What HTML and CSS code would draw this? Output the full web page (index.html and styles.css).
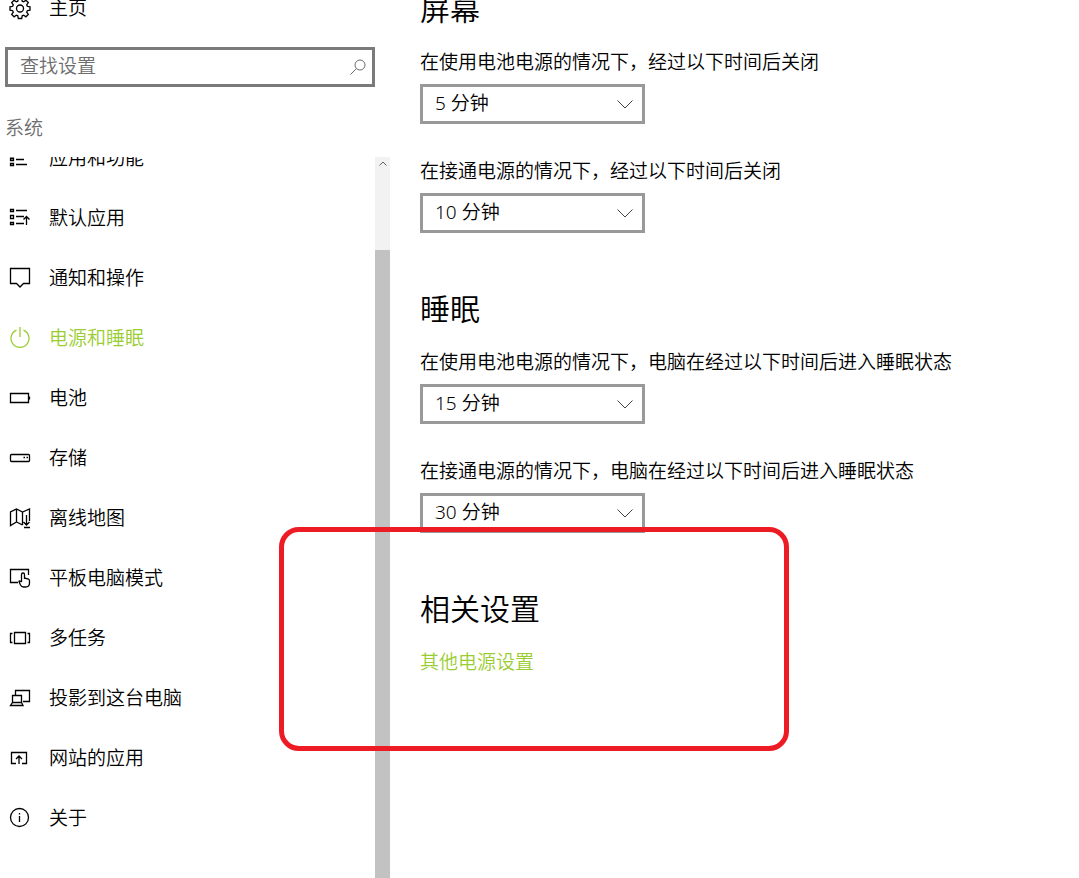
FILE: index.html
```
<!DOCTYPE html>
<html lang="zh-CN">
<head>
<meta charset="UTF-8" />
<meta name="viewport" content="width=device-width, initial-scale=1.0" />
<title>设置</title>
<link rel="stylesheet" href="styles.css">
</head>
<body>

<aside class="sidebar">
  <a class="nav-item home" href="#">
    <svg class="icon" viewBox="0 0 24 24"><path d="M10.3 2.5h3.4l.5 2.7 1.5.6 2.2-1.6 2.4 2.4-1.6 2.2.6 1.5 2.7.5v3.4l-2.7.5-.6 1.5 1.6 2.2-2.4 2.4-2.2-1.6-1.5.6-.5 2.7h-3.4l-.5-2.7-1.5-.6-2.2 1.6-2.4-2.4 1.6-2.2-.6-1.5-2.7-.5v-3.4l2.7-.5.6-1.5-1.6-2.2 2.4-2.4 2.2 1.6 1.5-.6z"/><circle cx="12" cy="12.5" r="3.5"/></svg>
    主页
  </a>

  <div class="search">
    <input type="text" placeholder="查找设置" aria-label="查找设置" />
    <svg class="search-icon" viewBox="0 0 16 16"><circle cx="10" cy="6" r="5"/><path d="M6.5 9.5L.5 15.5"/></svg>
  </div>

  <h2 class="group-title">系统</h2>

  <div class="nav-area">
    <nav>
      <a class="nav-item" href="#">
        <svg class="icon" viewBox="0 0 24 24"><path d="M2.5 7.5h3v3h-3zM2.5 12.5h3v2h-3zM2.5 17.5h3v2h-3zM8 8.5h11M8 13.5h8M8 18.5h11"/></svg>
        应用和功能
      </a>
      <a class="nav-item" href="#">
        <svg class="icon" viewBox="0 0 24 24"><path d="M2.5 3.5h3v2h-3zM2.5 9.5h3v3h-3zM2.5 16.5h3v2h-3zM8 4.5h11M8 10.5h8M8 17.5h8M18.5 19v-8M15.5 13.5l3-3 3 3"/></svg>
        默认应用
      </a>
      <a class="nav-item" href="#">
        <svg class="icon" viewBox="0 0 24 24"><path d="M2.5 2.5h19v15h-6L12 21l-3.5-3.5h-6z"/></svg>
        通知和操作
      </a>
      <a class="nav-item active" href="#">
        <svg class="icon" viewBox="0 0 24 24"><path d="M12 1v10M8.5 4.1a9 9 0 1 0 7 0"/></svg>
        电源和睡眠
      </a>
      <a class="nav-item" href="#">
        <svg class="icon" viewBox="0 0 24 24"><path d="M2.5 7.5h18v9h-18zM21.5 10.5v3"/></svg>
        电池
      </a>
      <a class="nav-item" href="#">
        <svg class="icon" viewBox="0 0 24 24"><rect x="2.5" y="8.5" width="19" height="7" rx="1"/><path d="M15.5 11.5h1.5M18.5 11.5h1.5"/></svg>
        存储
      </a>
      <a class="nav-item" href="#">
        <svg class="icon" viewBox="0 0 24 24"><path d="M14.5 19l-6-3-6 3.500V6l6-3 6 3 7-3v12M8.500 3v13M14.500 6v13M18.500 9v10M15.500 16l3 3 3-3M16 21.500h6"/></svg>
        离线地图
      </a>
      <a class="nav-item" href="#">
        <svg class="icon" viewBox="0 0 24 24"><path d="M10 16.500H2.500v-13h18V9M13.500 16V8.500a1.500 1.500 0 0 1 3 0V13M16.500 12l4 1q1 .5 1 2v2q0 4-4 4h-2q-2 0-3-2l-1.500-3.500q0-1.500 2.500.5"/></svg>
        平板电脑模式
      </a>
      <a class="nav-item" href="#">
        <svg class="icon" viewBox="0 0 24 24"><path d="M6.500 6.500h11v11h-11zM4.500 7.500h-2v9h2M19.500 7.500h2v9h-2"/></svg>
        多任务
      </a>
      <a class="nav-item" href="#">
        <svg class="icon" viewBox="0 0 24 24"><path d="M7.500 9V4.500h14v11H15M4.500 16V9.500h9V16M4.500 16.500h9l1.500 3H2.500z"/></svg>
        投影到这台电脑
      </a>
      <a class="nav-item" href="#">
        <svg class="icon" viewBox="0 0 24 24"><path d="M8 17.500H3.500v-11h15v11H14M11 18v-8M8 13l3-3 3 3"/></svg>
        网站的应用
      </a>
      <a class="nav-item" href="#">
        <svg class="icon" viewBox="0 0 24 24"><circle cx="11.500" cy="11.500" r="9"/><path d="M11.500 10v6M11.500 7v1.500"/></svg>
        关于
      </a>
    </nav>
    <div class="scrollbar">
      <svg viewBox="0 0 8 5"><path d="M.5 4.500L4 1l3.500 3.500"/></svg>
      <div class="thumb"></div>
    </div>
  </div>
</aside>

<main>
  <section>
    <h1>屏幕</h1>
    <div class="field">
      <label for="screen-battery">在使用电池电源的情况下，经过以下时间后关闭</label>
      <div class="select">
        <select id="screen-battery"><option>5 分钟</option></select>
        <svg viewBox="0 0 16 9"><path d="M.5 .5L8 8l7.500-7.500"/></svg>
      </div>
    </div>
    <div class="field">
      <label for="screen-plugged">在接通电源的情况下，经过以下时间后关闭</label>
      <div class="select">
        <select id="screen-plugged"><option>10 分钟</option></select>
        <svg viewBox="0 0 16 9"><path d="M.5 .5L8 8l7.500-7.500"/></svg>
      </div>
    </div>
  </section>

  <section>
    <h1>睡眠</h1>
    <div class="field">
      <label for="sleep-battery">在使用电池电源的情况下，电脑在经过以下时间后进入睡眠状态</label>
      <div class="select">
        <select id="sleep-battery"><option>15 分钟</option></select>
        <svg viewBox="0 0 16 9"><path d="M.5 .5L8 8l7.500-7.500"/></svg>
      </div>
    </div>
    <div class="field">
      <label for="sleep-plugged">在接通电源的情况下，电脑在经过以下时间后进入睡眠状态</label>
      <div class="select">
        <select id="sleep-plugged"><option>30 分钟</option></select>
        <svg viewBox="0 0 16 9"><path d="M.5 .5L8 8l7.500-7.500"/></svg>
      </div>
    </div>
  </section>

  <section class="related">
    <h1>相关设置</h1>
    <a href="#">其他电源设置</a>
    <div class="highlight"></div>
  </section>
</main>

</body>
</html>
```
FILE: styles.css
```
:root {
  --accent: #9acd32;
  --border: #999;
  --border-dark: #7a7a7a;
  --muted: #6d6d6d;
  --mark: #ed1c24;
}

* {
  box-sizing: border-box;
}

body {
  margin: 0;
  height: 100vh;
  display: flex;
  overflow: hidden;
  background-color: #fff;
  color: #000;
  font-family: "Noto Sans", "Noto Sans CJK SC", sans-serif;
  font-size: 19px;
  font-weight: 350;
  line-height: 24px;
}

h1, h2 {
  margin: 0;
  font-weight: 350;
}

svg {
  fill: none;
  stroke: currentColor;
}

/* sidebar */
.sidebar {
  flex: none;
  width: 390px;
  height: 100vh;
  display: flex;
  flex-direction: column;
}

.nav-item {
  display: flex;
  align-items: center;
  gap: 17px;
  height: 60px;
  padding-left: 8px;
  color: #000;
  text-decoration: none;
}

.nav-item.active {
  color: var(--accent);
}

.icon {
  width: 24px;
  height: 24px;
  stroke-width: 1.3;
}

/* scrolled a little past the top */
.home {
  flex: none;
  margin-top: -22px;
}

.search {
  position: relative;
  margin: 9px 15px 0 5px;
}

.search input {
  display: block;
  width: 100%;
  height: 40px;
  padding: 0 40px 2px 12px;
  border: 3px solid var(--border-dark);
  border-radius: 0;
  background-color: #fff;
  font: inherit;
}

.search input::placeholder {
  color: var(--muted);
  opacity: 1;
}

.search-icon {
  position: absolute;
  top: 12px;
  right: 9px;
  width: 16px;
  height: 16px;
  color: var(--muted);
}

.group-title {
  margin: 29px 0 17px 5px;
  color: var(--muted);
  font-size: 19px;
}

.nav-area {
  flex: 1;
  min-height: 0;
  display: flex;
  overflow: hidden;
}

.nav-area nav {
  flex: 1;
  margin-top: -29px;
}

.scrollbar {
  width: 15px;
  display: flex;
  flex-direction: column;
  align-items: center;
  background-color: #f2f2f2;
  color: #606060;
}

.scrollbar svg {
  flex: none;
  width: 8px;
  height: 5px;
  margin: 4px 0 84px;
}

.thumb {
  flex: 1;
  width: 100%;
  background-color: #c2c2c2;
}

/* content */
main {
  flex: 1;
  min-width: 0;
  display: flex;
  flex-direction: column;
  gap: 56px;
  margin-top: -11px;
  padding-left: 30px;
}

h1 {
  margin-bottom: 21px;
  font-size: 30px;
  line-height: 40px;
}

.field + .field {
  margin-top: 35px;
}

.field label {
  display: block;
  margin-bottom: 10px;
}

.select {
  position: relative;
  width: 225px;
}

.select select {
  display: block;
  width: 100%;
  height: 40px;
  padding: 0 40px 2px 12px;
  appearance: none;
  border: 3px solid var(--border);
  border-radius: 0;
  background-color: #fff;
  color: #000;
  font: inherit;
}

.select svg {
  position: absolute;
  top: 16px;
  right: 12px;
  width: 16px;
  height: 9px;
  color: #444;
  pointer-events: none;
}

.related {
  position: relative;
}

.related a {
  display: inline-block;
  color: var(--accent);
  text-decoration: none;
}

/* red frame round the related settings */
.highlight {
  position: absolute;
  top: -62px;
  left: -141px;
  width: 510px;
  height: 224px;
  border: 5px solid var(--mark);
  border-radius: 20px;
  pointer-events: none;
}
```
